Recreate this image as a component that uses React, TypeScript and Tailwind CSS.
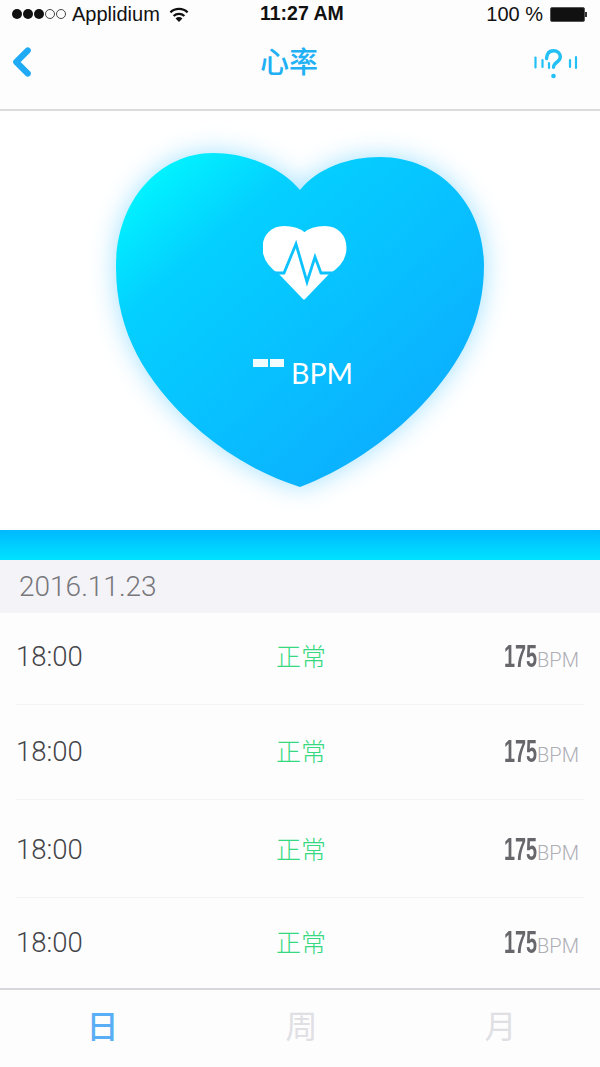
import { ChevronLeft } from 'lucide-react'

const rows = [
  { time: '18:00', height: 'h-[92px] pb-[3px]' },
  { time: '18:00', height: 'h-[95px]' },
  { time: '18:00', height: 'h-[98px] pt-[3px]' },
  { time: '18:00', height: 'h-[90px]' },
]

function StatusBar() {
  return (
    <div className="flex h-[28px] items-center justify-between pl-3 pr-[13px] font-['Liberation_Sans',sans-serif] text-[20px] text-[#111]">
      <div className="flex w-[190px] items-center">
        <div className="flex gap-px">
          <span className="size-[10px] rounded-full bg-[#111]" />
          <span className="size-[10px] rounded-full bg-[#111]" />
          <span className="size-[10px] rounded-full bg-[#111]" />
          <span className="size-[10px] rounded-full border border-[#444]" />
          <span className="size-[10px] rounded-full border border-[#444]" />
        </div>
        <span className="ml-[6px]">Applidium</span>
        <svg viewBox="0 0 20 16" className="ml-[9px] h-[16px] w-[20px]">
          <path d="M10 16 6.6 12.4a4.8 4.8 0 0 1 6.8 0Z" fill="#111" />
          <path d="M4.6 10a7.8 7.8 0 0 1 10.8 0" fill="none" stroke="#111" strokeWidth="2.2" />
          <path d="M1.4 6.4a12.4 12.4 0 0 1 17.2 0" fill="none" stroke="#111" strokeWidth="2.2" />
        </svg>
      </div>
      <span className="ml-[58px] text-[19.5px] font-bold">11:27 AM</span>
      <div className="ml-auto flex items-center">
        <span>100 %</span>
        <div className="ml-[7px] flex items-center">
          <div className="h-[15px] w-[35px] rounded-[2px] border border-[#555] bg-[#111]" />
          <div className="h-[5px] w-[2px] bg-[#333]" />
        </div>
      </div>
    </div>
  )
}

function HelpIcon() {
  return (
    <svg viewBox="0 0 70 55" className="h-[55px] w-[70px]" fill="none" stroke="#22c0f5" strokeLinecap="round">
      <g strokeWidth="2.2">
        <path d="M15.500 22.500v10" />
        <path d="M22.500 25v7" />
        <path d="M29 28v5" />
        <path d="M50 25v7" />
        <path d="M56 22v11" />
      </g>
      <path d="M26.500 23.500c.4-5 3-7.800 7-7.800s6.800 2.600 6.800 6.200c0 5-6.800 5.400-6.800 10.400" strokeWidth="3.400" />
      <circle cx="33.500" cy="41" r="2.300" fill="#22c0f5" stroke="none" />
    </svg>
  )
}

function NavBar() {
  return (
    <div className="relative flex h-[83px] items-start justify-between border-b-2 border-[#dcdcdc] bg-[#fdfdfe]">
      <ChevronLeft className="-ml-[1px] mt-[11px] size-[46px] text-[#1eaaf5]" strokeWidth={3.2} />
      <span className="absolute left-[260px] top-[13px] font-['Noto_Sans_CJK_SC',sans-serif] text-[29px] leading-[38px] font-medium text-[#22b0f5]">
        心率
      </span>
      <div className="mr-[10px] mt-[7px]">
        <HelpIcon />
      </div>
    </div>
  )
}

function Heart() {
  return (
    <div className="relative mt-[19px] h-[380px] w-[420px]">
      <svg viewBox="0 0 420 380" className="size-full overflow-visible drop-shadow-[0_0_13px_rgba(20,180,255,0.4)]">
        <defs>
          <linearGradient id="heart-fill" x1="0.08" y1="0.05" x2="0.85" y2="0.85">
            <stop offset="0" stopColor="#00f6ff" />
            <stop offset="0.25" stopColor="#04d0ff" />
            <stop offset="1" stopColor="#0caeff" />
          </linearGradient>
        </defs>
        <path
          d="M210 60C228 38 258 27 290 27C350 27 394 75 394 135C394 190 372 232 332 275C296 313 250 342 210 357C170 344 132 322 100 292C58 252 26 205 26 137C26 70 70 23 123 23C155 23 190 36 210 60Z"
          fill="url(#heart-fill)"
        />
      </svg>
      <svg viewBox="0 0 84 76" className="absolute left-[173px] top-[96px] h-[76px] w-[84px]">
        <path
          d="M41.500 8C36 3 29 1.500 21 1.500C9 1.500 1 10 1 22C1 33 8 41 17 47L41 72L65 47C75 41 82 33 82 22C82 10 74 1.500 62 1.500C54 1.500 47 3 41.500 8Z"
          fill="#fff"
          stroke="#fff"
          strokeWidth="3"
          strokeLinejoin="round"
        />
        <path d="M9 47H21L33 18L44 56L52 31L58 47H78" fill="none" stroke="#0cc2ff" strokeWidth="2.800" />
      </svg>
      <div className="absolute left-[163px] top-[229px] flex items-start">
        <div className="flex gap-[2px]">
          <span className="h-[8px] w-[15px] bg-white/95" />
          <span className="h-[8px] w-[14px] bg-white/95" />
        </div>
        <span className="ml-[7px] mt-[-4px] font-['Lato',sans-serif] text-[28.500px] leading-[36px] text-white">BPM</span>
      </div>
    </div>
  )
}

function Row({ time, height, last }: { time: string; height: string; last: boolean }) {
  return (
    <div className={`mx-4 grid grid-cols-3 items-center ${height} ${last ? '' : 'border-b border-[#f3f3f5]'}`}>
      <span className="font-['Roboto',sans-serif] text-[27.500px] font-light text-[#444448]">{time}</span>
      <span className="-mt-[2px] ml-[2px] text-center font-['Noto_Sans_CJK_SC',sans-serif] text-[25px] font-light text-[#36d97f]">正常</span>
      <div className="-mt-[2px] flex items-baseline justify-end pr-[5px] font-['Liberation_Sans',sans-serif]">
        <span className="inline-block w-[33px] origin-left scale-x-[0.62] text-[32px] font-bold whitespace-nowrap text-[#66666b]">175</span>
        <span className="font-['Roboto',sans-serif] text-[20px] font-light text-[#aeaeb4]">BPM</span>
      </div>
    </div>
  )
}

export default function App() {
  return (
    <div className="flex h-[1067px] w-[600px] flex-col overflow-hidden bg-[#fdfdfe]">
      <StatusBar />
      <NavBar />
      <div className="flex h-[419px] justify-center bg-white">
        <Heart />
      </div>
      <div className="h-[30px] bg-gradient-to-b from-[#00b9ff] to-[#00e2ff] shadow-[0_2px_4px_rgba(120,130,140,0.25)]" />
      <div className="flex h-[53px] items-center bg-[#f4f3f7] pl-[19px] font-['Roboto',sans-serif] text-[28px] font-light text-[#77777c]">
        2016.11.23
      </div>
      <div className="flex flex-col">
        {rows.map((r, i) => (
          <Row key={i} time={r.time} height={r.height} last={i === rows.length - 1} />
        ))}
      </div>
      <div className="grid flex-1 grid-cols-3 items-center border-t-2 border-[#d8d8dc] pb-[9px] pl-[3px] text-center font-['Noto_Sans_CJK_SC',sans-serif] text-[32px]">
        <span className="font-medium text-[#5aaef5]">日</span>
        <span className="text-[#e0e0e4]">周</span>
        <span className="text-[#e0e0e4]">月</span>
      </div>
    </div>
  )
}
